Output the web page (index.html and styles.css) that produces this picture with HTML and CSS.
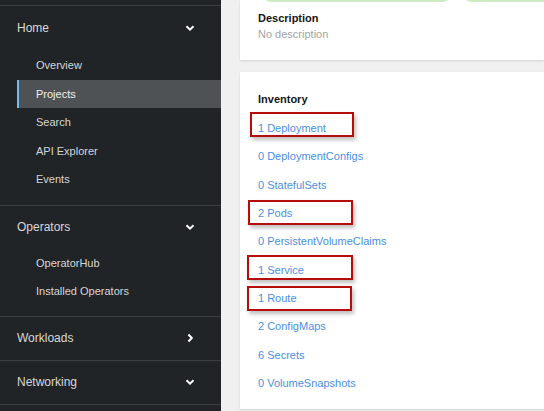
FILE: index.html
```html
<!DOCTYPE html>
<html lang="en">
<head>
<meta charset="utf-8">
<title>Project</title>
<link rel="stylesheet" href="styles.css">
</head>
<body>
<div class="app">
  <nav class="sidebar">
    <div class="top"></div>
    <section class="group group-home">
      <div class="group-head"><span>Home</span>
        <svg class="chev" viewBox="0 0 10 10" width="10" height="10"><path d="M1.5 3.2 L5 6.6 L8.5 3.2" fill="none" stroke="#fff" stroke-width="2"/></svg>
      </div>
      <ul class="sub">
        <li>Overview</li>
        <li class="active">Projects</li>
        <li>Search</li>
        <li>API Explorer</li>
        <li>Events</li>
      </ul>
    </section>
    <section class="group group-ops">
      <div class="group-head"><span>Operators</span>
        <svg class="chev" viewBox="0 0 10 10" width="10" height="10"><path d="M1.5 3.2 L5 6.6 L8.5 3.2" fill="none" stroke="#fff" stroke-width="2"/></svg>
      </div>
      <ul class="sub">
        <li>OperatorHub</li>
        <li>Installed Operators</li>
      </ul>
    </section>
    <section class="group closed">
      <div class="group-head"><span>Workloads</span>
        <svg class="chev" viewBox="0 0 10 10" width="10" height="10"><path d="M3.4 1.5 L6.8 5 L3.4 8.5" fill="none" stroke="#fff" stroke-width="2"/></svg>
      </div>
    </section>
    <section class="group closed">
      <div class="group-head"><span>Networking</span>
        <svg class="chev" viewBox="0 0 10 10" width="10" height="10"><path d="M1.5 3.2 L5 6.6 L8.5 3.2" fill="none" stroke="#fff" stroke-width="2"/></svg>
      </div>
    </section>
  </nav>
  <main class="main">
    <div class="card card-details">
      <div class="pills">
        <div class="pill pill-a"></div>
        <div class="pill pill-b"></div>
      </div>
      <div class="label">Description</div>
      <div class="muted">No description</div>
    </div>
    <div class="card card-inventory">
      <div class="label">Inventory</div>
      <ul class="links">
        <li><a>1 Deployment</a><span class="mark mark-1"></span></li>
        <li><a>0 DeploymentConfigs</a></li>
        <li><a>0 StatefulSets</a></li>
        <li><a>2 Pods</a><span class="mark mark-2"></span></li>
        <li><a>0 PersistentVolumeClaims</a></li>
        <li><a>1 Service</a><span class="mark mark-3"></span></li>
        <li><a>1 Route</a><span class="mark mark-4"></span></li>
        <li><a>2 ConfigMaps</a></li>
        <li><a>6 Secrets</a></li>
        <li><a>0 VolumeSnapshots</a></li>
      </ul>
    </div>
  </main>
</div>
</body>
</html>
```
FILE: styles.css
```css
* { box-sizing: border-box; }
html, body { margin: 0; padding: 0; }
body {
  background: #f0f0f0;
  font-family: "Liberation Sans", Arial, sans-serif;
  font-size: 11px;
  overflow: hidden;
  height: 411px;
}
.app { display: flex; height: 411px; }
.sidebar {
  width: 221px;
  flex: none;
  background: #212427;
  color: #d2d2d2;
}
.top { height: 6px; border-bottom: 1px solid #3c3f42; }
.group { border-bottom: 1px solid #3c3f42; padding-bottom: 11px; }
.group-home .sub { padding-top: 2px; }
.group-ops { padding-bottom: 10px; }
.group.closed { padding-bottom: 0; }
.group-head {
  height: 43px;
  display: flex;
  align-items: center;
  justify-content: space-between;
  padding: 0 26px 0 17px;
  font-size: 12px;
  color: #d8d8d8;
}
.chev { display: block; }
.sub { list-style: none; margin: 0; padding: 0 0 0 17px; }
.sub li {
  height: 28.5px;
  line-height: 28.5px;
  padding-left: 19px;
  font-size: 11px;
  color: #d6d6d6;
}
.sub li.active {
  background: #4f5255;
  border-left: 2px solid #73bcf7;
  padding-left: 17px;
  color: #f0f0f0;
}
.main { flex: 1; padding-left: 19px; display: flex; flex-direction: column; gap: 12px; }
.card {
  background: #fff;
  box-shadow: 0 1px 2px rgba(0,0,0,0.12);
  padding-left: 18px;
}
.card-details { height: 60px; padding-top: 15px; }
.pills { display: flex; gap: 10px; margin-top: -33px; margin-bottom: 8px; margin-left: 4px; }
.pill {
  height: 20px;
  border: 2px solid #cdeac0;
  border-radius: 10px;
}
.pill-a { width: 190px; }
.pill-b { flex: 1; margin-right: -20px; }
.label { font-weight: bold; color: #151515; line-height: 16px; }
.muted { color: #a3a3a3; line-height: 16px; }
.card-inventory { flex: 1; padding-top: 19px; margin-bottom: 2px; }
.links { list-style: none; margin: 7px 0 0; padding: 0; }
.links li { position: relative; height: 28.33px; line-height: 28.33px; }
.links a { color: #4a90e2; }
.mark {
  position: absolute;
  left: -10px;
  width: 105px;
  height: 25px;
  border: 2px solid #b80c0c;
  box-shadow: 2px 3px 4px rgba(0,0,0,0.25);
}
.mark-1 { top: -2px; left: -8px; width: 104px; }
.mark-2 { top: 1px; }
.mark-3 { top: -1px; left: -11px; width: 106px; }
.mark-4 { top: 2px; left: -11px; }
```
